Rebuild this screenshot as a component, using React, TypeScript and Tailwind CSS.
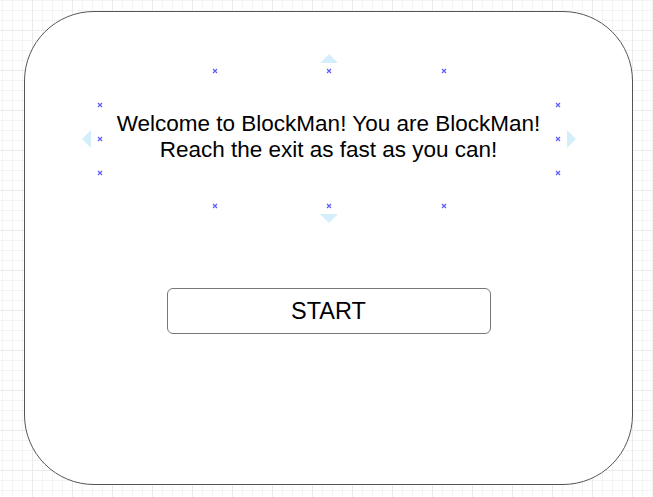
import React from "react";

const Mark = ({ x, y }: { x: number; y: number }) => (
  <svg
    className="absolute"
    style={{ left: x - 3, top: y - 3 }}
    width="6"
    height="6"
    viewBox="0 0 6 6"
  >
    <path d="M1 1 L5 5 M5 1 L1 5" stroke="#5c5cff" strokeWidth="1.2" />
  </svg>
);

export default function App() {
  const marks = [
    [115, 0],
    [229, 0],
    [344, 0],
    [0, 34],
    [0, 68],
    [0, 102],
    [458, 34],
    [458, 68],
    [458, 102],
    [115, 135],
    [229, 135],
    [344, 135],
  ];
  return (
    <div
      className="w-[653px] h-[497px] overflow-hidden bg-white pt-[11px] pl-[24px] [background-image:linear-gradient(to_right,#ebebeb_1px,transparent_1px),linear-gradient(to_bottom,#ebebeb_1px,transparent_1px),linear-gradient(to_right,#f4f4f4_1px,transparent_1px),linear-gradient(to_bottom,#f4f4f4_1px,transparent_1px)] [background-size:40px_40px,40px_40px,10px_10px,10px_10px] [background-position:-8px_-10px,-8px_-10px,2px_0px,2px_0px]"
      style={{ fontFamily: '"Liberation Sans", Arial, sans-serif' }}
    >
      <div className="w-[609px] h-[474px] rounded-[70px] border border-[#555] bg-white flex flex-col items-center pt-[59px]">
        <div className="relative w-[458px] h-[135px] flex items-center justify-center">
          <div className="text-[22.5px] leading-[26px] text-black text-center -mt-[3px] whitespace-nowrap">
            Welcome to BlockMan! You are BlockMan!
            <br />
            Reach the exit as fast as you can!
          </div>
          {marks.map(([x, y], i) => (
            <Mark key={i} x={x} y={y} />
          ))}
          <svg className="absolute left-[220px] -top-[17px]" width="18" height="9" viewBox="0 0 18 9">
            <path d="M0 9 L9 0 L18 9 Z" fill="#d4effb" />
          </svg>
          <svg className="absolute left-[220px] top-[143px]" width="18" height="9" viewBox="0 0 18 9">
            <path d="M0 0 L18 0 L9 9 Z" fill="#d4effb" />
          </svg>
          <svg className="absolute -left-[18px] top-[59px]" width="9" height="18" viewBox="0 0 9 18">
            <path d="M9 0 L9 18 L0 9 Z" fill="#d4effb" />
          </svg>
          <svg className="absolute left-[467px] top-[59px]" width="9" height="18" viewBox="0 0 9 18">
            <path d="M0 0 L9 9 L0 18 Z" fill="#d4effb" />
          </svg>
        </div>
        <div className="mt-[82px] w-[324px] h-[46px] pt-[2px] rounded-[6px] border border-[#777] flex items-center justify-center text-[23.5px] text-black">
          START
        </div>
      </div>
    </div>
  );
}
